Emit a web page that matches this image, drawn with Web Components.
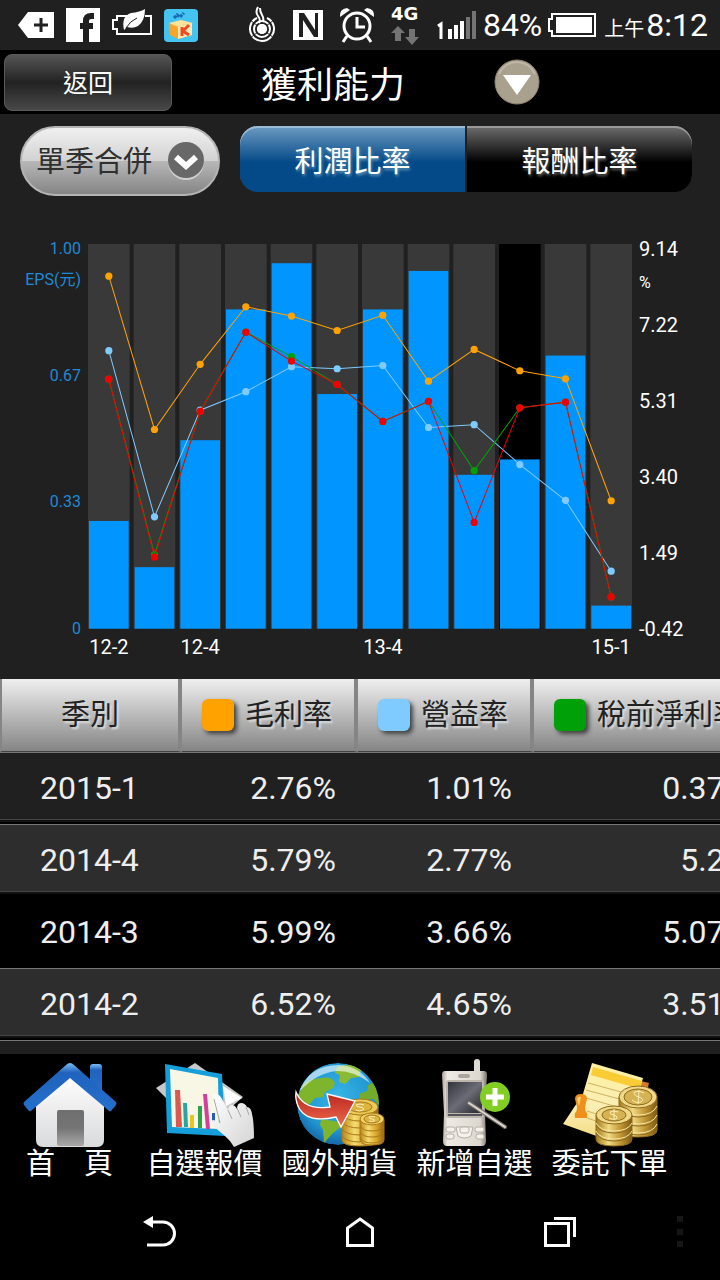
<!DOCTYPE html>
<html lang="zh-Hant">
<head>
<meta charset="utf-8">
<meta name="viewport" content="width=device-width, initial-scale=1">
<title>獲利能力</title>
<style>
  body {
    margin: 0;
    min-height: 100vh;
    display: flex;
    flex-direction: column;
    background: #202020;
    color: #fff;
    font-family: Roboto, "Noto Sans CJK TC", sans-serif;
    overflow-x: hidden;
  }
  nav-bar { flex: 1; }
</style>
</head>
<body>
<status-bar></status-bar>
<title-bar>獲利能力</title-bar>
<ratio-filter></ratio-filter>
<profit-chart></profit-chart>
<ratio-table></ratio-table>

<dock-bar>
  <dock-item>
    <svg slot="icon" width="105" height="92" viewBox="0 0 105 92">
      <defs>
        <linearGradient id="roof" x1="0" y1="0" x2="0" y2="1"><stop offset="0" stop-color="#7dbcf4"/><stop offset=".2" stop-color="#1f63bd"/><stop offset="1" stop-color="#2470cc"/></linearGradient>
        <linearGradient id="wall" x1="0" y1="0" x2="0" y2="1"><stop offset="0" stop-color="#fff"/><stop offset="1" stop-color="#d9dadb"/></linearGradient>
        <linearGradient id="door" x1="0" y1="0" x2="0" y2="1"><stop offset="0" stop-color="#6f6f6f"/><stop offset=".5" stop-color="#747474"/><stop offset="1" stop-color="#a9a9a9"/></linearGradient>
      </defs>
      <rect x="73" y="8" width="12" height="30" rx="3" fill="url(#roof)"/>
      <path d="M19 46 53 18 87 46V84q0 7-7 7H26q-7 0-7-7z" fill="url(#wall)"/>
      <path d="M53 7 Q55 7 57 9L99 46q1 2 0 3l-5 6q-2 1-3-1L53 22 15 54q-2 2-3 1l-5-6q-1-2 0-3L49 9q2-2 4-2z" fill="url(#roof)"/>
      <rect x="40" y="54" width="27" height="36" rx="2" fill="url(#door)"/>
    </svg>
    首　頁
  </dock-item>
  <dock-item>
    <svg slot="icon" width="105" height="92" viewBox="0 0 105 92">
      <defs>
        <linearGradient id="glove" x1="0" y1="0" x2="1" y2="1"><stop offset="0" stop-color="#fff"/><stop offset="1" stop-color="#d4d4d4"/></linearGradient>
      </defs>
      <path d="M43 7 91 41 76 54 14 42 4 32z" fill="#c6c8ca"/>
      <path d="M71 30 90 42 74 50z" fill="#fff"/>
      <path d="M13 8 70 18 73 80 15 77z" fill="#149fdb"/>
      <path d="M18 13 66 22 67 73 20 71z" fill="#f8f7e6"/>
      <path d="M23 34h5l2 37h-6z" fill="#d95a50"/>
      <path d="M31 47h4l1 24h-4z" fill="#2aa6a2"/>
      <path d="M38 59h4v13h-4z" fill="#e5c61e"/>
      <path d="M46 50h4v22h-4z" fill="#2ea34b"/>
      <path d="M51 38h4l3 35h-4z" fill="#d1409a"/>
      <path d="M60 57h3v8h-3z" fill="#275db0"/>
      <path d="M61 42q0-4 4-4 3 1 5 5l6 11q1-5 4-5 3 0 5 4 0-6 4-6 4 0 6 4 4 0 5 7 2 8 2 24l-20 9q-3-6-9-11L60 69q-2-4 1-5 3 0 7 3L62 51z" fill="url(#glove)"/>
      <path d="M62 43l6 24M76 54l4 9M85 52l4 9M94 51l3 8" fill="none" stroke="#a8a8a8"/>
    </svg>
    自選報價
  </dock-item>
  <dock-item>
    <svg slot="icon" width="105" height="92" viewBox="0 0 105 92">
      <defs>
        <radialGradient id="sea" cx=".5" cy=".4" r=".6"><stop offset="0" stop-color="#38b4e4"/><stop offset=".7" stop-color="#2097d2"/><stop offset="1" stop-color="#1667a8"/></radialGradient>
        <linearGradient id="gold"><stop offset="0" stop-color="#b98414"/><stop offset=".35" stop-color="#f6dc70"/><stop offset=".7" stop-color="#d8a22a"/><stop offset="1" stop-color="#94640c"/></linearGradient>
        <linearGradient id="dart" x1="0" y1="0" x2="0" y2="1"><stop offset="0" stop-color="#b8241c"/><stop offset="1" stop-color="#ef6a4e"/></linearGradient>
        <clipPath id="ball"><circle cx="51" cy="48" r="41"/></clipPath>
      </defs>
      <g clip-path="url(#ball)">
        <circle cx="51" cy="48" r="41" fill="url(#sea)"/>
        <path d="M17 28q8-6 18-6 9-2 13 5l-2 5-8 4-2 5-8 1-6 7-9-2-2-8z" fill="#7fb52d"/>
        <path d="M50 11q15-5 24 3l-2 7-8 1-6 6-6-2 1-7-5-2z" fill="#8bbb35"/>
        <path d="M72 38l8-3 1-6 9-4 4 14v12l-8-8-13 1z" fill="#75ab2a"/>
        <path d="M34 63l19 3 2 4-9 7-9 10-1-13-3-5z" fill="#7fb52d"/>
      </g>
      <path d="M12 36Q22 9 52 9q20 1 31 18Q67 15 51 15 30 16 12 36z" fill="#fff" opacity=".6"/>
      <g stroke="#a8781a" stroke-width="1">
        <path d="M55 51v33q0 6 18 6t18-6V51z" fill="url(#gold)"/>
        <path d="M55 59q4 6 18 6M55 66q4 6 18 6M55 73q4 6 18 6M55 80q4 6 18 6" fill="none"/>
        <ellipse cx="73" cy="51" rx="18" ry="8" fill="#eccb56"/>
        <ellipse cx="73" cy="51" rx="12" ry="5" fill="#dcb442"/>
        <path d="M77 49q-4-2-8 0 0 2 4 2 5 1 3 3-4 2-7 0" fill="none" stroke="#fbeeb9"/>
        <path d="M73 64v20q0 5 12 5t12-5V64z" fill="url(#gold)"/>
        <path d="M73 70q3 5 12 5t12-5M73 76q3 5 12 5t12-5M73 82q3 5 12 5t12-5" fill="none"/>
        <ellipse cx="85" cy="63" rx="12" ry="6" fill="#f0d264"/>
        <ellipse cx="85" cy="63" rx="8" ry="4" fill="#dcb442"/>
        <path d="M88 61q-3-1-6 0 0 2 3 2 4 1 2 2-3 1-5 0" fill="none" stroke="#fbeeb9"/>
      </g>
      <path d="M9 36Q17 55 43 51L40 38 68 45 54 71 49 61Q19 68 11 50 8 43 9 36z" fill="url(#dart)" stroke="#fff" stroke-width="1.3"/>
    </svg>
    國外期貨
  </dock-item>
  <dock-item>
    <svg slot="icon" width="105" height="92" viewBox="0 0 105 92">
      <defs>
        <linearGradient id="shell"><stop offset="0" stop-color="#a9a29a"/><stop offset=".12" stop-color="#eeebe4"/><stop offset=".85" stop-color="#dcd7ce"/><stop offset="1" stop-color="#79736c"/></linearGradient>
        <linearGradient id="glass" x1="0" y1="0" x2="1" y2="1"><stop offset="0" stop-color="#34343c"/><stop offset=".5" stop-color="#6c6c76"/><stop offset="1" stop-color="#25252c"/></linearGradient>
      </defs>
      <rect x="52" y="3" width="6" height="18" rx="3" fill="#dedbd4"/>
      <path d="M23 15h39q3 0 3 4l-2 38 1 28q0 5-4 5H25q-4 0-4-5l1-28-2-38q0-4 3-4z" fill="url(#shell)"/>
      <rect x="36" y="18" width="12" height="4" rx="2" fill="#aaa59d"/>
      <rect x="24" y="24" width="38" height="38" rx="3" fill="#bcb6ad"/>
      <rect x="26" y="26" width="34" height="31" fill="url(#glass)"/>
      <rect x="26" y="58" width="34" height="2" fill="#55535a"/>
      <g fill="#f5f2ec" stroke="#b5aea4">
        <path d="M34 71h17l-2 9q-7 4-13 0z"/>
        <rect x="38" y="71" width="9" height="6" rx="2"/>
        <rect x="24" y="71" width="9" height="5" rx="2"/>
        <rect x="53" y="71" width="9" height="5" rx="2"/>
        <rect x="24" y="78" width="8" height="5" rx="2"/>
        <rect x="54" y="78" width="8" height="5" rx="2"/>
      </g>
      <circle cx="73" cy="41" r="15" fill="#83ce22"/>
      <path d="M73 32v18M64 41h18" stroke="#fff" stroke-width="5"/>
      <path d="M47 47 83 71" stroke="#77716a" stroke-width="4" stroke-linecap="round"/>
      <path d="M47 47 83 71" stroke="#dcd8cf" stroke-width="2" stroke-linecap="round"/>
    </svg>
    新增自選
  </dock-item>
  <dock-item>
    <svg slot="icon" width="105" height="92" viewBox="0 0 105 92">
      <defs>
        <linearGradient id="sheet" x1="0" y1="0" x2="0" y2="1"><stop offset="0" stop-color="#fdf0a0"/><stop offset=".6" stop-color="#fbeeb4"/><stop offset="1" stop-color="#f3dc82"/></linearGradient>
        <linearGradient id="brass"><stop offset="0" stop-color="#a27a1c"/><stop offset=".35" stop-color="#f2da83"/><stop offset=".7" stop-color="#bd9232"/><stop offset="1" stop-color="#7d5a12"/></linearGradient>
      </defs>
      <path d="M80 24l12 3-3 12-9-3z" fill="#cf7d2c"/>
      <path d="M35 7 86 22 72 72 45 82 6 68 20 47 26 38z" fill="url(#sheet)"/>
      <path d="M36 11 85 25 83 33 34 19z" fill="#f9cc35"/>
      <path d="M31 27 68 37M29 34 66 44M26 41 60 51M30 55l16 5M30 62l12 4" stroke="#cdb463" stroke-width="1"/>
      <path d="M18 43q0-5 6-5t6 5l-2 8q0 4 1 5 2 1 1 6H18q-1-5 1-6 1-1 1-5z" fill="#ef8f1c"/>
      <path d="M20 43q1-3 4-2l-2 9z" fill="#ffd079"/>
      <g stroke="#8e6a1e" stroke-width="1">
        <path d="M62 41v33q0 7 19 7t19-7V41z" fill="url(#brass)"/>
        <path d="M62 50q4 9 19 9t19-9M62 59q4 9 19 9t19-9M62 68q4 9 19 9t19-9" fill="none" stroke="#f7e6a4"/>
        <path d="M62 52q4 9 19 9t19-9M62 61q4 9 19 9t19-9M62 70q4 9 19 9t19-9" fill="none"/>
        <ellipse cx="81" cy="41" rx="19" ry="11" fill="#efd987"/>
        <ellipse cx="81" cy="41" rx="14" ry="8" fill="#d6b352"/>
        <path d="M87 37q-5-3-10-1 0 4 5 5 6 2 2 5-5 2-9-2M82 34l-1 14" fill="none" stroke="#fbeeb9"/>
        <path d="M39 59v24q0 7 18 7t18-7V59z" fill="url(#brass)"/>
        <path d="M39 67q4 8 18 8t18-8M39 75q4 8 18 8t18-8" fill="none" stroke="#f7e6a4"/>
        <path d="M39 69q4 8 18 8t18-8M39 77q4 8 18 8t18-8" fill="none"/>
        <ellipse cx="57" cy="59" rx="18" ry="9" fill="#efd987"/>
        <ellipse cx="57" cy="59" rx="12" ry="6" fill="#d6b352"/>
        <path d="M61 56q-4-2-8 0 0 3 4 3 5 2 2 4-4 1-7-1M57 53v11" fill="none" stroke="#fbeeb9"/>
      </g>
    </svg>
    委託下單
  </dock-item>
</dock-bar>
<nav-bar></nav-bar>

<script>
class StatusBar extends HTMLElement {
  constructor() {
    super();
    this.attachShadow({ mode: 'open' }).innerHTML = `
      <style>
        :host { display: flex; justify-content: space-between; align-items: center;
                height: 50px; padding: 0 12px 0 18px; font-size: 32px; line-height: 50px; }
        div { display: flex; align-items: center; }
        .notes { gap: 12px; }
        .state { gap: 6px; }
        .radios { gap: 16px; }
        svg { display: block; flex: none; }
        time { display: flex; align-items: baseline; gap: 2px; }
        small { font-size: 20px; line-height: 30px; }
      </style>
      <div class="notes">
        <svg width="36" height="50" viewBox="0 0 36 50"><path d="M0 25 10 12H36V38H10z" fill="#fff"/><path d="M23 18v14M16 25h14" stroke="#202020" stroke-width="3"/></svg>
        <svg width="34" height="50" viewBox="0 0 34 50"><path d="M0 8h34v34H0z" fill="#fff"/><path d="M28 16h-3q-5 0-5 5v21M14 26h13" fill="none" stroke="#202020" stroke-width="6"/></svg>
        <svg width="40" height="50" viewBox="0 0 40 50"><path d="M15 16H5v4H1v9h4v5h34V16h-6" fill="none" stroke="#fff" stroke-width="2"/><path d="M12 30Q9 16 19 13q9-1 14-4 0 12-7 17-5 3-11 1l-3 3z" fill="#fff"/><path d="M14 28q4-7 11-10" stroke="#202020" fill="none"/></svg>
        <svg width="34" height="50" viewBox="0 0 34 50"><rect y="9" width="34" height="33" rx="4" fill="#45c4f1"/><path d="M5 23l9 3v13l-8-4zM14 26l14-3v12l-14 4z" fill="#f9a52c"/><path d="M5 23l12-3 12 3-15 4z" fill="#fde39a"/><path d="M14 27l14-4v12l-14 4z" fill="#ffe9b5"/><path d="M18 27v9M25 25l-6 6 6 4" fill="none" stroke="#ee4b1e" stroke-width="3"/><path d="M10 18l3-3 3 2 4-4" stroke="#1769b5" stroke-width="3" stroke-dasharray="3 1" fill="none"/></svg>
      </div>
      <div class="state">
        <div class="radios">
          <svg width="30" height="50" viewBox="0 0 30 50"><circle cx="15" cy="29" r="5" fill="#fff"/><g fill="none" stroke="#fff" stroke-width="2"><circle cx="15" cy="29" r="8"/><path d="M10 18a12 12 0 1 0 10 0"/><path d="M12 23q2-3-1-7t0-9M16 22q1-4-1-7t-2-7"/></g><path d="M3 38 27 20M3 20 27 38" stroke="#202020"/><circle cx="15" cy="29" r="5" fill="#fff"/></svg>
          <svg width="30" height="50" viewBox="0 0 30 50"><path d="M0 10h30v30H0z" fill="#fff"/><path d="M6 37V13h5l11 17V13h3v24h-4L10 20v17z" fill="#202020"/><path d="M13 12h5l2 3v7zM12 38V27l6 11z" fill="#fff"/></svg>
          <svg width="36" height="50" viewBox="0 0 36 50"><circle cx="18" cy="26" r="13" fill="none" stroke="#fff" stroke-width="3"/><path d="M18 17v10h8M8 36l-4 6M28 36l4 6" fill="none" stroke="#fff" stroke-width="3"/><path d="M1 17q-1-8 7-9l3 2zM35 17q1-8-7-9l-3 2z" fill="#fff"/></svg>
          <svg width="28" height="50" viewBox="0 0 28 50"><text x="0" y="20" font-family="DejaVu Sans" font-weight="bold" font-size="18" fill="#fff">4G</text><path d="M7 26l7 7h-4v8H4v-8H0zM21 45l7-8h-4v-8h-6v8h-4z" fill="#747474"/></svg>
          <svg width="42" height="50" viewBox="0 0 42 50"><path d="M3 26l3-2v15" fill="none" stroke="#fff" stroke-width="3"/><path d="M13 29h4v10h-4zM19 25h4v14h-4zM25 21h4v18h-4z" fill="#fff"/><path d="M31 17h4v22h-4zM37 11h4v28h-4z" fill="#747474"/></svg>
        </div>
        <span>84%</span>
        <svg width="50" height="50" viewBox="0 0 50 50"><path d="M4 14H47V36H4V31H1V19H4z" fill="none" stroke="#fff" stroke-width="2"/><path d="M8 17h36v16H8z" fill="#fff"/></svg>
        <time><small>上午</small>8:12</time>
      </div>`;
  }
}

class TitleBar extends HTMLElement {
  constructor() {
    super();
    this.attachShadow({ mode: 'open' }).innerHTML = `
      <style>
        :host { display: grid; grid-template-columns: 168px 1fr 46px 176px; align-items: center;
                height: 64px; padding: 0 4px; background: #000; }
        button { font: inherit; color: inherit; padding: 0; border: 0; background: none; }
        .back { height: 57px; padding-bottom: 2px; border: 1px solid #5a5a5a; border-radius: 8px; font-size: 25px;
                background: linear-gradient(#555, #222 50%, #484848); }
        h1 { margin: 0; font-size: 36px; font-weight: normal; text-align: center; }
        svg { display: block; }
      </style>
      <button class="back">返回</button>
      <h1><slot></slot></h1>
      <button aria-label="選單">
        <svg width="46" height="46" viewBox="0 0 46 46"><circle cx="23" cy="23" r="22" fill="#aaa08e" stroke="#8f8574"/><path d="M5 15Q11 3 23 3t18 12" fill="none" stroke="#bfb7a8" stroke-width="2"/><path d="M9 16H37L23 36z" fill="#fff"/></svg>
      </button>`;
  }
}

class RatioFilter extends HTMLElement {
  constructor() {
    super();
    this.attachShadow({ mode: 'open' }).innerHTML = `
      <style>
        :host { display: flex; align-items: flex-start; gap: 20px; padding: 12px 28px 43px 20px; }
        .period { flex: 0 0 200px; display: grid; align-items: center; }
        .period > * { grid-area: 1 / 1; }
        select { appearance: none; box-sizing: border-box; width: 100%; height: 70px; padding: 2px 0 0 14px;
                 border: 2px solid #b4b4b4; border-radius: 35px; color: #303030; font: inherit; font-size: 29px;
                 background: linear-gradient(#f0f0f0, #d2d2d2 50%, #b8b8b8 50%, #858585); }
        svg { justify-self: end; margin-right: 16px; pointer-events: none; }
        .tabs { flex: 1; display: flex; gap: 2px; }
        button { flex: 1; height: 66px; padding: 0; border: 0; color: #fff; font: inherit; font-size: 29px;
                 background: linear-gradient(#6e6e6e, #000 55%); box-shadow: inset 0 2px #999;
                 text-shadow: 1px 2px 3px #666; border-radius: 0 18px 18px 0; }
        .on { background: linear-gradient(#6e9cc2, #044a88 55%); box-shadow: inset 0 2px #9bbcd6;
              text-shadow: 1px 2px 3px #69b; border-radius: 18px 0 0 18px; }
      </style>
      <div class="period">
        <select aria-label="期間"><option>單季合併</option></select>
        <svg width="36" height="38" viewBox="0 0 36 38"><circle cx="18" cy="20" r="18" fill="#d0d0d0"/><circle cx="18" cy="18" r="18" fill="#686868"/><path d="M8 15l10 9 10-9" fill="none" stroke="#fff" stroke-width="6"/></svg>
      </div>
      <div class="tabs">
        <button class="on">利潤比率</button>
        <button>報酬比率</button>
      </div>`;
  }
}

// EPS bars on the left scale, one line per ratio on the right scale
const EPS = [.28, .16, .49, .83, .95, .61, .83, .93, .40, .44, .71, .06];
const SERIES = [
  ['#ffa200', [8.34, 4.53, 6.15, 7.58, 7.35, 6.99, 7.37, 5.73, 6.52, 5.99, 5.79, 2.76]],
  ['#7fcaff', [6.49, 2.36, 5.01, 5.47, 6.09, 6.04, 6.12, 4.58, 4.65, 3.66, 2.77, 1.01]],
  ['#00a008', [5.78, 1.42, 4.98, 6.95, 6.34, 5.65, 4.73, 5.23, 3.51, 5.07, 5.21, .37]],
  ['#f00000', [5.78, 1.36, 4.98, 6.95, 6.23, 5.65, 4.73, 5.23, 2.22, 5.07, 5.21, .37]]
];
const QUARTERS = ['12-2', '', '12-4', '', '', '', '13-4', '', '', '', '', '15-1'];
const TOP = 9.14, BOTTOM = -0.42, SELECTED = 9;

class ProfitChart extends HTMLElement {
  constructor() {
    super();
    this.attachShadow({ mode: 'open' });
  }
  connectedCallback() { this.render(); }

  plot() {
    const w = 543, h = 384, gap = 4;
    const cw = (w - gap * 11) / 12;
    const x = i => i * (cw + gap);
    const y = v => (TOP - v) / (TOP - BOTTOM) * h;
    const bars = EPS.map((v, i) => `
      <rect x="${x(i)}" width="${cw}" height="${h}" fill="${i === SELECTED ? '#000' : '#393939'}"/>
      <rect x="${x(i) + 1}" y="${h - v * h}" width="${cw - 2}" height="${v * h}" fill="#0095ff"/>`);
    const lines = SERIES.map(([color, values]) => {
      const pts = values.map((v, i) => [x(i) + cw / 2, y(v)]);
      return `<polyline points="${pts.join(' ')}" fill="none" stroke="${color}"/>` +
        pts.map(([cx, cy]) => `<circle cx="${cx}" cy="${cy}" r="3.6" fill="${color}"/>`).join('');
    });
    return `<svg viewBox="0 0 ${w} ${h}">${bars.join('')}${lines.join('')}</svg>`;
  }

  render() {
    this.shadowRoot.innerHTML = `
      <style>
        :host { display: grid; grid-template-columns: 88px 1fr 88px; padding-bottom: 14px; }
        ul { display: flex; flex-direction: column; justify-content: space-between;
             margin: 0 0 26px; padding: 0 7px; list-style: none; font-size: 20px; line-height: 20px; }
        li { height: 20px; }
        small { display: block; font-size: 16px; line-height: 48px; }
        .eps { text-align: right; color: #1f8ad6; font-size: 16px; }
        .eps small { line-height: 42px; }
        .plot { padding-top: 5px; }
        svg { display: block; width: 100%; }
        .x { display: grid; grid-template-columns: repeat(12, 1fr); column-gap: 4px;
             font-size: 20px; line-height: 36px; text-align: center; }
        .x span { min-width: 0; }
      </style>
      <ul class="eps">
        <li>1.00<small>EPS(元)</small></li><li>0.67</li><li>0.33</li><li>0</li>
      </ul>
      <div class="plot">
        ${this.plot()}
        <div class="x">${QUARTERS.map(q => `<span>${q}</span>`).join('')}</div>
      </div>
      <ul>
        <li>9.14<small>%</small></li><li>7.22</li><li>5.31</li><li>3.40</li><li>1.49</li><li>-0.42</li>
      </ul>`;
  }
}

const ROWS = [
  ['2015-1', '2.76%', '1.01%', '0.37%'],
  ['2014-4', '5.79%', '2.77%', '5.2%'],
  ['2014-3', '5.99%', '3.66%', '5.07%'],
  ['2014-2', '6.52%', '4.65%', '3.51%']
];

class RatioTable extends HTMLElement {
  constructor() {
    super();
    this.attachShadow({ mode: 'open' });
  }
  connectedCallback() {
    const head = (color, text) =>
      `<th><span><i style="background:${color}"></i>${text}</span></th>`;
    this.shadowRoot.innerHTML = `
      <style>
        :host { display: block; overflow: hidden; padding-bottom: 13px; }
        table { width: 770px; table-layout: fixed; border-spacing: 0; border-bottom: 1px solid #777; }
        th { height: 72px; padding: 0; border-right: 4px solid #858585; border-bottom: 1px solid #444;
             background: linear-gradient(#efefef, #858585) padding-box; box-sizing: content-box;
             color: #222; font-size: 29px; line-height: 32px; font-weight: normal; text-shadow: 2px 2px 2px #ddd; }
        th:first-child { border-left: 2px solid #858585; }
        th:last-child { border-right: 0; }
        th span { display: flex; align-items: center; gap: 11px; padding-left: 20px; white-space: nowrap; }
        i { width: 32px; height: 32px; border-radius: 6px; box-shadow: 3px 3px 4px #444; }
        td { height: 72px; padding: 0 22px 0 0; font-size: 32px; color: #eee; text-align: right;
             background: linear-gradient(#777 1px, var(--row) 1px 67px, #444 67px 68px, #111 68px 70px, #000 70px); }
        td:first-child { padding-left: 40px; text-align: left; }
        tr { --row: #202020; }
        tr:nth-child(even) { --row: #2d2d2d; }
        tr.on { --row: #000; }
        tr.on td { background: #000; }
      </style>
      <table>
        <colgroup><col style="width:182px"><col style="width:176px"><col style="width:176px"><col style="width:236px"></colgroup>
        <thead><tr><th>季別</th>${head('#ffa200', '毛利率')}${head('#7fcaff', '營益率')}${head('#00a008', '稅前淨利率')}</tr></thead>
        <tbody>${ROWS.map(r => `
          <tr${r[0] === '2014-3' ? ' class="on"' : ''}>${r.map(c => `<td>${c}</td>`).join('')}</tr>`).join('')}
        </tbody>
      </table>`;
  }
}

class DockBar extends HTMLElement {
  constructor() {
    super();
    this.attachShadow({ mode: 'open' }).innerHTML = `
      <style>
        :host { display: flex; height: 130px; padding-left: 2px; background: #000; overflow: hidden; }
      </style>
      <slot></slot>`;
  }
}

class DockItem extends HTMLElement {
  constructor() {
    super();
    this.attachShadow({ mode: 'open' }).innerHTML = `
      <style>
        :host { display: block; flex: 0 0 135px; }
        a { display: flex; flex-direction: column; align-items: center; padding-top: 2px;
            color: #fff; font-size: 29px; line-height: 32px; text-decoration: none; white-space: nowrap; }
        ::slotted(svg) { display: block; }
      </style>
      <a href="#"><slot name="icon"></slot><span><slot></slot></span></a>`;
  }
}

class NavBar extends HTMLElement {
  constructor() {
    super();
    this.attachShadow({ mode: 'open' }).innerHTML = `
      <style>
        :host { display: grid; grid-template-columns: 1fr 1fr 1fr 40px; place-items: center;
                min-height: 96px; padding: 0 20px 0 60px; background: #000; }
        button { padding: 0; border: 0; background: none; }
        svg { display: block; fill: none; stroke: #fff; stroke-width: 3; }
        .more { fill: #161616; stroke: none; }
      </style>
      <button aria-label="返回"><svg width="36" height="36" viewBox="0 0 36 36"><path d="M9 8H21a11.5 11.5 0 0 1 0 23H5"/><path d="M1 8 11 2V14z" fill="#fff" stroke="none"/></svg></button>
      <button aria-label="主畫面"><svg width="36" height="36" viewBox="0 0 36 36"><path d="M18 5 30.5 14V31.5H5.5V14z"/></svg></button>
      <button aria-label="最近"><svg width="36" height="36" viewBox="0 0 36 36"><path d="M3.5 9.5h23v22h-23zM12 4.5H32.500V23"/></svg></button>
      <button aria-label="更多"><svg class="more" width="36" height="36" viewBox="0 0 36 36"><path d="M15 2h6v6h-6zM15 15h6v6h-6zM15 27h6v6h-6z"/></svg></button>`;
  }
}

customElements.define('status-bar', StatusBar);
customElements.define('title-bar', TitleBar);
customElements.define('ratio-filter', RatioFilter);
customElements.define('profit-chart', ProfitChart);
customElements.define('ratio-table', RatioTable);
customElements.define('dock-item', DockItem);
customElements.define('dock-bar', DockBar);
customElements.define('nav-bar', NavBar);
</script>
</body>
</html>
